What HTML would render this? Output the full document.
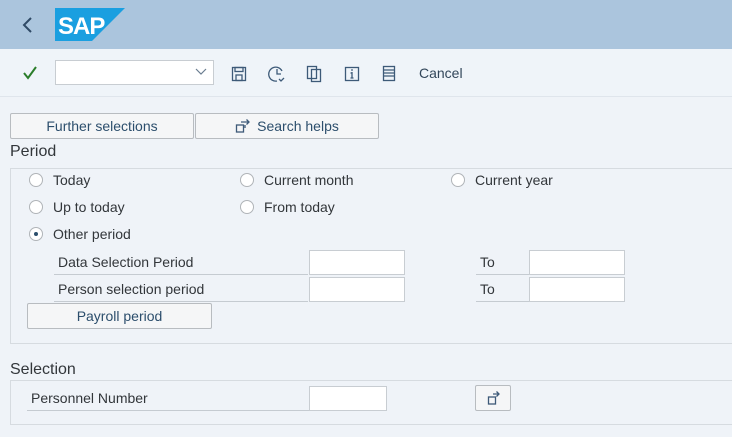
<!DOCTYPE html>
<html><head><style>
*{margin:0;padding:0;box-sizing:border-box}
body{width:732px;height:437px;background:#eff3f8;font-family:"Liberation Sans",sans-serif;position:relative;overflow:hidden;color:#32363a}
.a{position:absolute}
.hdr{left:0;top:0;width:732px;height:49px;background:#abc5dd}
.tb{left:0;top:49px;width:732px;height:48px;background:#eff4f9;border-bottom:1px solid #dfe5ec}
.btn{background:#f5f6f7;border:1px solid #b8bcc0;border-radius:2px;color:#2c4e6c;font-size:14px;text-align:center;line-height:24px}
.inp{background:#fff;border:1px solid #c8cdd2}
.lbl{font-size:14px;color:#32363a}
.rad{width:14px;height:14px;border:1px solid #b0b4b8;border-radius:50%;background:#fff}
.ul{border-bottom:1px solid #c5cbd1}
.grp{border:1px solid #d6dbe0}
.ic{stroke:#3d5a78;fill:none;stroke-width:1.3}
</style></head><body>
<div class="a hdr"></div>
<svg class="a" style="left:21px;top:16px" width="14" height="18"><path d="M10 2L3 9l7 7" stroke="#2f4a66" stroke-width="2" fill="none"/></svg>
<svg class="a" style="left:55px;top:8px" width="70" height="33"><polygon points="0,0 70,0 37,33 0,33" fill="#1a9fe0"/><text x="3" y="26" font-family="Liberation Sans" font-weight="bold" font-size="24" fill="#fff" letter-spacing="-1">SAP</text></svg>
<div class="a tb"></div>
<svg class="a" style="left:22px;top:65px" width="16" height="16"><path d="M2 8l4 5 8-11" stroke="#2b7d2b" stroke-width="2" fill="none"/></svg>
<div class="a inp" style="left:55px;top:60px;width:159px;height:25px"></div>
<svg class="a" style="left:195px;top:68px" width="12" height="8"><path d="M1 1l5 5 5-5" stroke="#6a7d90" stroke-width="1.2" fill="none"/></svg>
<svg class="a" style="left:231px;top:66px" width="16" height="16"><rect class="ic" x="1.5" y="1.5" width="13" height="13"/><rect class="ic" x="4" y="1.5" width="8" height="4"/><rect class="ic" x="5" y="9" width="6" height="5.5"/></svg>
<svg class="a" style="left:268px;top:65px" width="18" height="18"><path class="ic" d="M14 6A7 7 0 1 0 9 16"/><path class="ic" d="M9 4v5h4M11 14l2 2 3-3"/></svg>
<svg class="a" style="left:306px;top:65px" width="18" height="18"><rect class="ic" x="1.5" y="1.5" width="9" height="12"/><rect class="ic" x="5.5" y="4.5" width="9" height="12" fill="#eff4f9"/></svg>
<svg class="a" style="left:344px;top:66px" width="16" height="16"><rect class="ic" x="1.5" y="1.5" width="13" height="13"/><path class="ic" d="M8 6v6M6.5 12h3M6.5 7H8" /><circle cx="8" cy="4" r=".9" fill="#3d5a78"/></svg>
<svg class="a" style="left:382px;top:65px" width="14" height="17"><rect class="ic" x="1.5" y="1.5" width="11" height="14"/><path class="ic" d="M1.5 5h11M1.5 8h11M1.5 11h11"/></svg>
<div class="a" style="left:419px;top:65px;font-size:14px;color:#32465a">Cancel</div>

<div class="a btn" style="left:10px;top:113px;width:184px;height:26px">Further selections</div>
<div class="a btn" style="left:195px;top:113px;width:184px;height:26px"><svg width="16" height="14" style="vertical-align:-2px;margin-right:6px"><rect class="ic" x="1.5" y="6" width="7" height="7"/><path class="ic" d="M6 3h8M11.5 0.5l2.5 2.5-2.5 2.5M10 6v3"/></svg>Search helps</div>
<div class="a" style="left:10px;top:143px;font-size:16px;color:#32363a">Period</div>
<div class="a grp" style="left:10px;top:168px;width:730px;height:176px"></div>
<div class="a rad" style="left:29px;top:173px"></div><div class="a lbl" style="left:53px;top:172px">Today</div>
<div class="a rad" style="left:240px;top:173px"></div><div class="a lbl" style="left:264px;top:172px">Current month</div>
<div class="a rad" style="left:451px;top:173px"></div><div class="a lbl" style="left:475px;top:172px">Current year</div>
<div class="a rad" style="left:29px;top:200px"></div><div class="a lbl" style="left:53px;top:199px">Up to today</div>
<div class="a rad" style="left:240px;top:200px"></div><div class="a lbl" style="left:264px;top:199px">From today</div>
<div class="a rad" style="left:29px;top:227px"><div style="width:4px;height:4px;border-radius:50%;background:#2c4e6c;margin:4px"></div></div><div class="a lbl" style="left:53px;top:226px">Other period</div>

<div class="a ul" style="left:54px;top:250px;width:254px;height:25px"></div>
<div class="a lbl" style="left:58px;top:254px">Data Selection Period</div>
<div class="a inp" style="left:309px;top:250px;width:96px;height:25px"></div>
<div class="a ul" style="left:476px;top:250px;width:53px;height:25px"></div>
<div class="a lbl" style="left:480px;top:254px">To</div>
<div class="a inp" style="left:529px;top:250px;width:96px;height:25px"></div>

<div class="a ul" style="left:54px;top:277px;width:254px;height:25px"></div>
<div class="a lbl" style="left:58px;top:281px">Person selection period</div>
<div class="a inp" style="left:309px;top:277px;width:96px;height:25px"></div>
<div class="a ul" style="left:476px;top:277px;width:53px;height:25px"></div>
<div class="a lbl" style="left:480px;top:281px">To</div>
<div class="a inp" style="left:529px;top:277px;width:96px;height:25px"></div>

<div class="a btn" style="left:27px;top:303px;width:185px;height:26px">Payroll period</div>

<div class="a" style="left:10px;top:361px;font-size:16px;color:#32363a">Selection</div>
<div class="a grp" style="left:10px;top:380px;width:730px;height:45px"></div>
<div class="a ul" style="left:27px;top:386px;width:282px;height:25px"></div>
<div class="a lbl" style="left:31px;top:390px">Personnel Number</div>
<div class="a inp" style="left:309px;top:386px;width:78px;height:25px"></div>
<div class="a btn" style="left:475px;top:385px;width:36px;height:26px"><svg width="16" height="14" style="vertical-align:-2px"><rect class="ic" x="3.5" y="6" width="7" height="7"/><path class="ic" d="M8 3h6M11.5 0.5l2.5 2.5-2.5 2.5"/></svg></div>
</body></html>
